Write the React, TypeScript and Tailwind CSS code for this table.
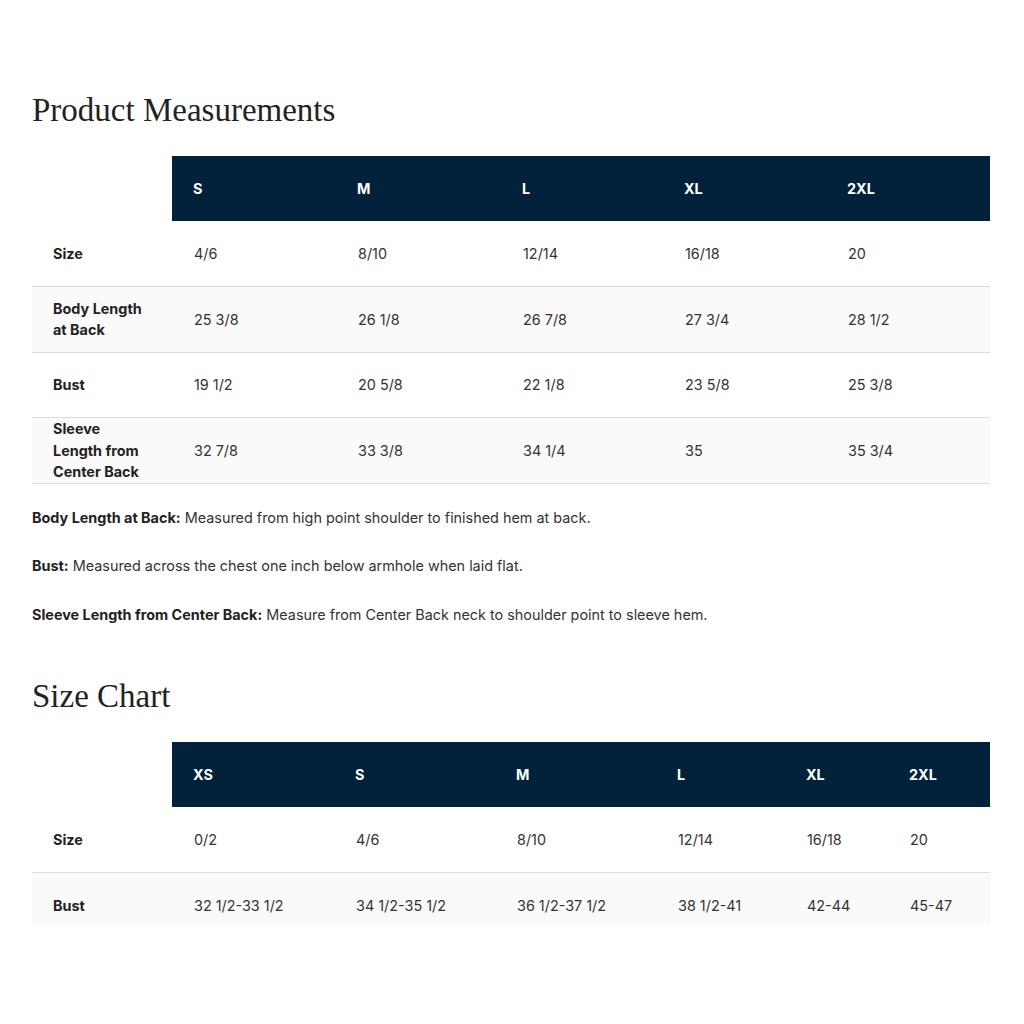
import React from 'react';

const navy = 'bg-[#01223a]';

type Table = {
  sizes: string[];
  widths: number[];
  rows: { label: string[]; values: string[] }[];
};

const measurements: Table = {
  sizes: ['S', 'M', 'L', 'XL', '2XL'],
  widths: [140, 164, 165, 162, 163, 164],
  rows: [
    { label: ['Size'], values: ['4/6', '8/10', '12/14', '16/18', '20'] },
    { label: ['Body Length', 'at Back'], values: ['25 3/8', '26 1/8', '26 7/8', '27 3/4', '28 1/2'] },
    { label: ['Bust'], values: ['19 1/2', '20 5/8', '22 1/8', '23 5/8', '25 3/8'] },
    { label: ['Sleeve', 'Length from', 'Center Back'], values: ['32 7/8', '33 3/8', '34 1/4', '35', '35 3/4'] },
  ],
};

const sizeChart: Table = {
  sizes: ['XS', 'S', 'M', 'L', 'XL', '2XL'],
  widths: [140, 162, 161, 161, 129, 103, 102],
  rows: [
    { label: ['Size'], values: ['0/2', '4/6', '8/10', '12/14', '16/18', '20'] },
    { label: ['Bust'], values: ['32 1/2-33 1/2', '34 1/2-35 1/2', '36 1/2-37 1/2', '38 1/2-41', '42-44', '45-47'] },
  ],
};

// cut: last row is clipped at the bottom, as in the screenshot
function SizeTable({ table, cut }: { table: Table; cut?: boolean }) {
  return (
    <table className="w-[958px] table-fixed border-collapse text-[14.4px] leading-[21px]">
      <colgroup>
        {table.widths.map((w, i) => (
          <col key={i} style={{ width: w }} />
        ))}
      </colgroup>
      <thead>
        <tr className="h-[65px]">
          <th className="bg-white" />
          {table.sizes.map((s) => (
            <th key={s} className={`${navy} pl-[21px] text-left font-bold text-white`}>
              {s}
            </th>
          ))}
        </tr>
      </thead>
      <tbody>
        {table.rows.map((row, i) => {
          const isLast = i === table.rows.length - 1;
          const clipped = isLast && cut;
          const cell = clipped ? 'align-top pt-[22px]' : '';
          return (
            <tr
              key={i}
              className={`${clipped ? 'h-[53px]' : 'h-[65.6px]'} ${i % 2 === 1 ? 'bg-[#fafafa]' : 'bg-white'} ${
                clipped ? '' : 'border-b border-[#dcdcdc]'
              }`}
            >
              <td className={`pl-[21px] pr-2 font-bold leading-[21.5px] text-[#222] ${cell}`}>
                {row.label.map((l) => (
                  <div key={l}>{l}</div>
                ))}
              </td>
              {row.values.map((v, j) => (
                <td key={j} className={`pl-[22px] text-[#333] ${cell}`}>
                  {v}
                </td>
              ))}
            </tr>
          );
        })}
      </tbody>
    </table>
  );
}

const notes = [
  ['Body Length at Back:', 'Measured from high point shoulder to finished hem at back.'],
  ['Bust:', 'Measured across the chest one inch below armhole when laid flat.'],
  ['Sleeve Length from Center Back:', 'Measure from Center Back neck to shoulder point to sleeve hem.'],
];

const serif = { fontFamily: '"Liberation Serif", "DejaVu Serif", serif' };

export default function App() {
  return (
    <div className="min-h-screen bg-white px-8 pt-[90px] text-[#333]" style={{ fontFamily: 'Inter, "Noto Sans", sans-serif' }}>
      <h2 className="mb-[26px] text-[33px] leading-[40px] text-[#222]" style={serif}>
        Product Measurements
      </h2>
      <SizeTable table={measurements} />
      <div className="mt-[23px] text-[14.4px] leading-[21px]">
        {notes.map(([b, t]) => (
          <p key={b} className="mb-[27.5px]">
            <span className="font-bold text-[#222]">{b}</span> {t}
          </p>
        ))}
      </div>
      <h2 className="mb-[26px] mt-[51px] text-[33px] leading-[40px] text-[#222]" style={serif}>
        Size Chart
      </h2>
      <SizeTable table={sizeChart} cut />
    </div>
  );
}
